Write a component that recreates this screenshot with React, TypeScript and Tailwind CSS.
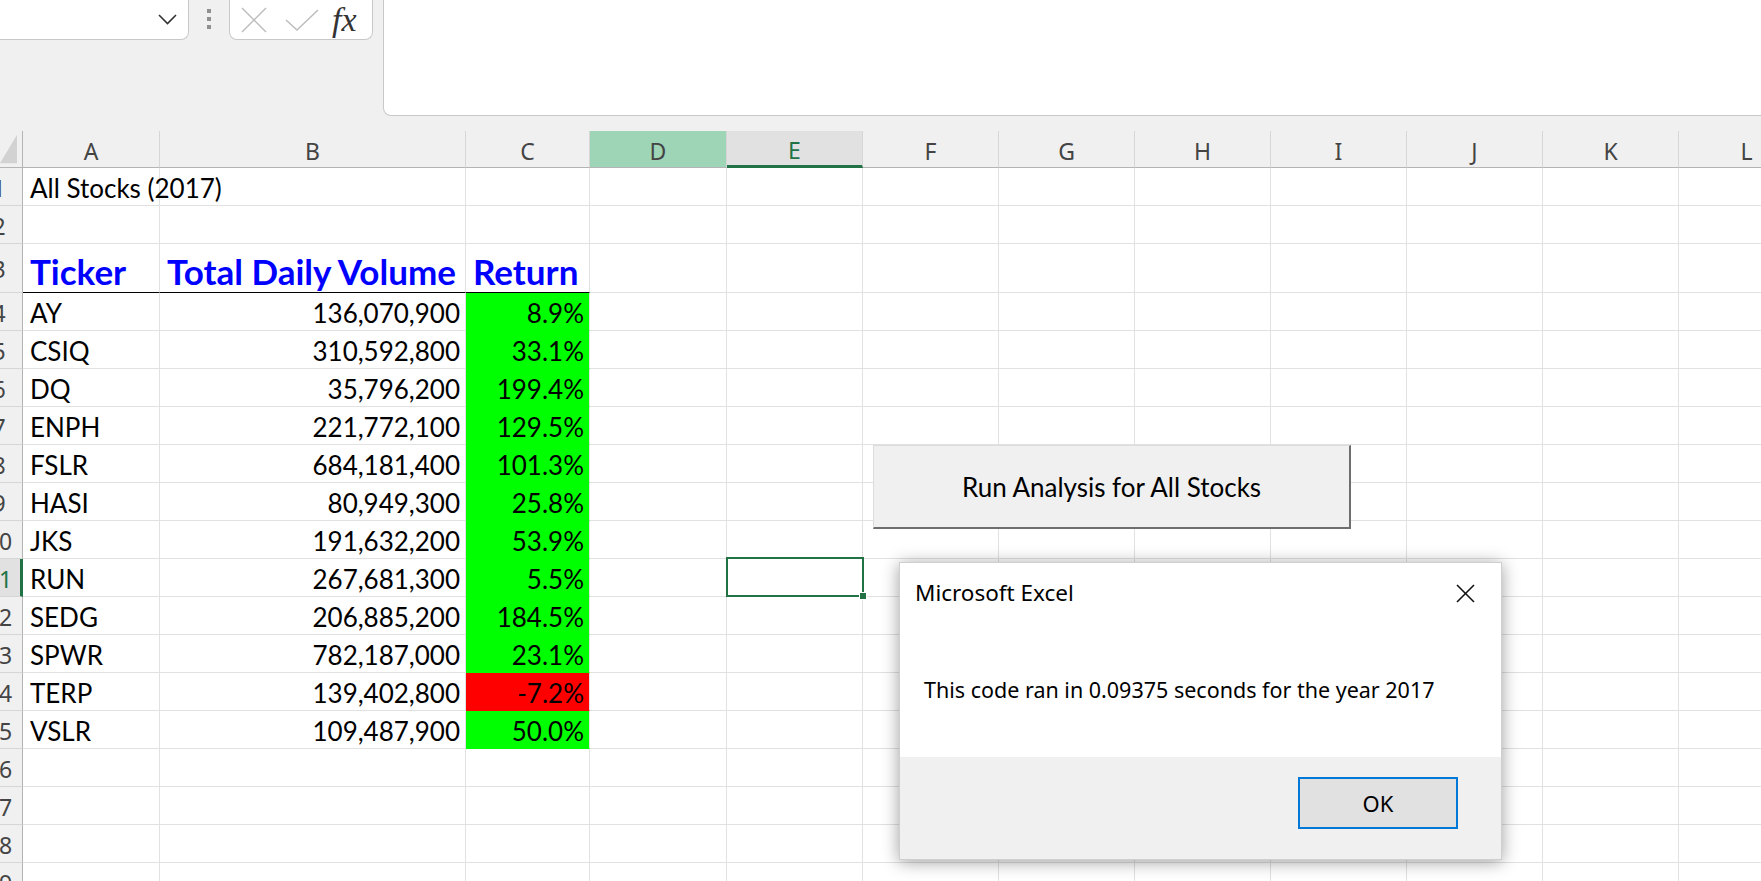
import React from 'react';

type Stock = { t: string; v: string; r: string; neg?: boolean };

const stocks: Stock[] = [
  { t: 'AY', v: '136,070,900', r: '8.9%' },
  { t: 'CSIQ', v: '310,592,800', r: '33.1%' },
  { t: 'DQ', v: '35,796,200', r: '199.4%' },
  { t: 'ENPH', v: '221,772,100', r: '129.5%' },
  { t: 'FSLR', v: '684,181,400', r: '101.3%' },
  { t: 'HASI', v: '80,949,300', r: '25.8%' },
  { t: 'JKS', v: '191,632,200', r: '53.9%' },
  { t: 'RUN', v: '267,681,300', r: '5.5%' },
  { t: 'SEDG', v: '206,885,200', r: '184.5%' },
  { t: 'SPWR', v: '782,187,000', r: '23.1%' },
  { t: 'TERP', v: '139,402,800', r: '-7.2%', neg: true },
  { t: 'VSLR', v: '109,487,900', r: '50.0%' },
];

const cols = [
  { l: 'A', w: 'w-[137px]' },
  { l: 'B', w: 'w-[306px]' },
  { l: 'C', w: 'w-[124px]' },
  { l: 'D', w: 'w-[137px]' },
  { l: 'E', w: 'w-[136px]' },
  { l: 'F', w: 'w-[136px]' },
  { l: 'G', w: 'w-[136px]' },
  { l: 'H', w: 'w-[136px]' },
  { l: 'I', w: 'w-[136px]' },
  { l: 'J', w: 'w-[136px]' },
  { l: 'K', w: 'w-[136px]' },
  { l: 'L', w: 'w-[136px]' },
];

const rows = Array.from({ length: 19 }, (_, i) => i + 1);

function TopBar() {
  return (
    <div className="h-[131px] flex items-start">
      {/* name box */}
      <div className="w-[189px] h-[40px] shrink-0 bg-white border-r border-b border-[#c8c8c8] rounded-br-[8px] flex items-center justify-end pr-[11px]">
        <svg width="19" height="11" viewBox="0 0 19 11">
          <polyline points="1,1 9.5,9.5 18,1" fill="none" stroke="#333" strokeWidth="1.6" />
        </svg>
      </div>
      <div className="w-[40px] h-[40px] shrink-0 flex flex-col items-center pt-[9px] gap-[4px]">
        <div className="w-[4px] h-[4px] bg-[#909090]" />
        <div className="w-[4px] h-[4px] bg-[#909090]" />
        <div className="w-[4px] h-[4px] bg-[#909090]" />
      </div>
      {/* fx box */}
      <div className="w-[144px] h-[40px] shrink-0 bg-white border-l border-r border-b border-[#c8c8c8] rounded-b-[8px] flex items-center pl-[11px]">
        <svg width="26" height="26" viewBox="0 0 26 26">
          <line x1="1" y1="1" x2="25" y2="25" stroke="#bdbdbd" strokeWidth="1.5" />
          <line x1="25" y1="1" x2="1" y2="25" stroke="#bdbdbd" strokeWidth="1.5" />
        </svg>
        <svg width="34" height="24" viewBox="0 0 34 24" className="ml-[18px] mt-[2px]">
          <polyline points="1,11 12,21 33,1" fill="none" stroke="#bdbdbd" strokeWidth="1.5" />
        </svg>
        <span className="ml-[13px] font-['Liberation_Serif',serif] italic text-[34px] leading-[34px] text-[#333]">fx</span>
      </div>
      {/* formula input */}
      <div className="ml-[10px] flex-1 h-[116px] bg-white border-l border-b border-[#c8c8c8] rounded-bl-[8px]" />
    </div>
  );
}

function ColHeader() {
  return (
    <div className="flex h-[37px] font-['Noto_Sans',sans-serif] text-[23px] leading-none text-[#444]">
      <div className="w-[23px] shrink-0 border-r border-b border-[#b4b4b4] flex items-end justify-end pr-[5px] pb-[3px]">
        <svg width="18" height="30" viewBox="0 0 18 30">
          <polygon points="18,0 18,30 0,30" fill="#d2d2d2" />
        </svg>
      </div>
      {cols.map((c) => {
        let cls = 'border-b border-b-[#b4b4b4]';
        if (c.l === 'D') cls = 'bg-[#9fd5b7] border-b border-b-[#b4b4b4]';
        if (c.l === 'E') cls = 'bg-[#e1e1e1] border-b-[3px] border-b-[#217346] text-[#217346]';
        return (
          <div
            key={c.l}
            className={`${c.w} shrink-0 flex items-center justify-center pt-[5px] border-r border-r-[#d6d6d6] ${cls}`}
          >
            {c.l}
          </div>
        );
      })}
    </div>
  );
}

function Cell({
  w,
  children,
  right,
  fill,
  bold,
  line,
  spill,
}: {
  w: string;
  children?: React.ReactNode;
  right?: boolean;
  fill?: 'green' | 'red';
  bold?: boolean;
  line?: boolean;
  spill?: boolean;
}) {
  let bg = 'bg-white border-b-[#e1e1e1]';
  if (fill === 'green') bg = 'bg-[#00ff00] border-b-[#00ff00]';
  if (fill === 'red') bg = 'bg-[#ff0000] border-b-[#ff0000]';
  if (line) bg = 'bg-white border-b-black';
  return (
    <div
      className={`${w} shrink-0 h-full flex items-end border-r border-r-[#e1e1e1] border-b whitespace-nowrap overflow-visible ${bg} ${
        spill ? 'relative z-10' : ''
      } ${right ? 'justify-end pr-[5px]' : 'justify-start pl-[7px]'} ${
        bold ? 'font-bold text-[#0000ff] text-[35px] leading-[40px] pb-[1px]' : 'text-[26px] leading-[30px] text-black pb-[2px]'
      }`}
    >
      {children}
    </div>
  );
}

function SheetRow({ n }: { n: number }) {
  const h = n === 3 ? 'h-[49px]' : 'h-[38px]';
  const active = n === 11;
  const stock = n >= 4 && n <= 15 ? stocks[n - 4] : null;
  return (
    <div className={`flex ${h}`}>
      <div
        className={`w-[23px] shrink-0 overflow-hidden flex items-center pt-[3px] border-b border-b-[#d6d6d6] font-['Noto_Sans',sans-serif] text-[23px] leading-none ${
          active ? 'bg-[#e1e1e1] border-r-[3px] border-r-[#217346] text-[#217346]' : 'bg-[#f0f0f0] border-r border-r-[#b4b4b4] text-[#444]'
        }`}
      >
        <div className="w-[48px] shrink-0 -ml-[25px] text-center">{n}</div>
      </div>
      <div className="flex font-[Lato,sans-serif]">
        {cols.map((c, i) => {
          if (n === 1 && i === 0)
            return (
              <Cell key={c.l} w={c.w} spill>
                All Stocks (2017)
              </Cell>
            );
          if (n === 3 && i === 0) return <Cell key={c.l} w={c.w} bold line>Ticker</Cell>;
          if (n === 3 && i === 1) return <Cell key={c.l} w={c.w} bold line>Total Daily Volume</Cell>;
          if (n === 3 && i === 2) return <Cell key={c.l} w={c.w} bold line>Return</Cell>;
          if (stock && i === 0) return <Cell key={c.l} w={c.w}>{stock.t}</Cell>;
          if (stock && i === 1) return <Cell key={c.l} w={c.w} right>{stock.v}</Cell>;
          if (stock && i === 2)
            return (
              <Cell key={c.l} w={c.w} right fill={stock.neg ? 'red' : 'green'}>
                {stock.r}
              </Cell>
            );
          return <Cell key={c.l} w={c.w} />;
        })}
      </div>
    </div>
  );
}

function RunButton() {
  return (
    <div className="absolute left-[873px] top-[445px] w-[478px] h-[84px] bg-[#f0f0f0] border-t border-l border-[#dcdcdc] border-r-2 border-b-2 border-r-[#6e6e6e] border-b-[#6e6e6e] flex items-center justify-center font-[Lato,sans-serif] text-[26px] leading-none text-black">
      Run Analysis for All Stocks
    </div>
  );
}

function MessageBox() {
  return (
    <div className="absolute left-[899px] top-[562px] w-[603px] h-[298px] flex flex-col bg-white border border-[#cfcfcf] shadow-[0_2px_16px_rgba(0,0,0,0.38)] font-['Noto_Sans',sans-serif] text-black">
      <div className="flex-1 flex flex-col">
        <div className="flex items-center justify-between h-[60px] pl-[15px] pr-[26px]">
          <span className="text-[22.5px] leading-none">Microsoft Excel</span>
          <svg width="19" height="19" viewBox="0 0 19 19">
            <line x1="1" y1="1" x2="18" y2="18" stroke="#111" strokeWidth="1.6" />
            <line x1="18" y1="1" x2="1" y2="18" stroke="#111" strokeWidth="1.6" />
          </svg>
        </div>
        <div className="pl-[24px] pt-[56px] text-[21.5px] leading-none">This code ran in 0.09375 seconds for the year 2017</div>
      </div>
      <div className="h-[102px] bg-[#f0f0f0] flex items-start justify-end pt-[20px] pr-[43px]">
        <div className="w-[160px] h-[52px] bg-[#e1e1e1] border-2 border-[#0078d7] flex items-center justify-center text-[22px] leading-none">
          OK
        </div>
      </div>
    </div>
  );
}

export default function App() {
  return (
    <div className="w-[1761px] h-[881px] overflow-hidden relative bg-[#f0f0f0]">
      <TopBar />
      <ColHeader />
      {rows.map((n) => (
        <SheetRow key={n} n={n} />
      ))}
      <RunButton />
      {/* active cell E11 */}
      <div className="absolute left-[726px] top-[557px] w-[138px] h-[40px] border-2 border-[#217346]">
        <div className="absolute -right-[5px] -bottom-[5px] w-[8px] h-[8px] bg-[#217346] border border-white" />
      </div>
      <MessageBox />
    </div>
  );
}
